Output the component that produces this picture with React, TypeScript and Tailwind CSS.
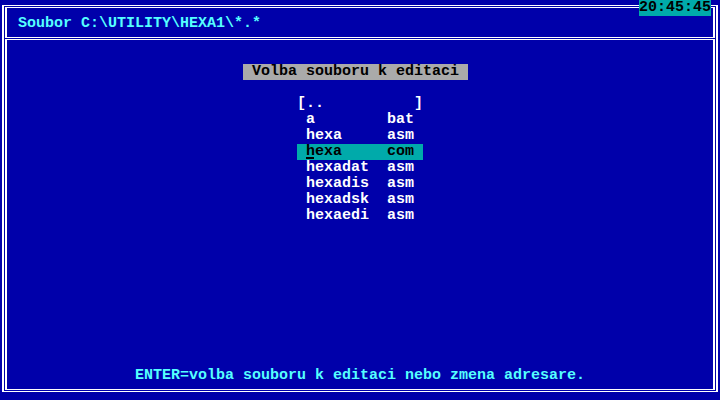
const files: [string, string][] = [
  ['a', 'bat'],
  ['hexa', 'asm'],
  ['hexa', 'com'],
  ['hexadat', 'asm'],
  ['hexadis', 'asm'],
  ['hexadsk', 'asm'],
  ['hexaedi', 'asm'],
];

const SELECTED = 2;

function FileRow({ name, ext, selected }: { name: string; ext: string; selected: boolean }) {
  return (
    <div
      className={`flex h-4 w-[126px] whitespace-pre ${
        selected ? 'bg-[#00aaaa] text-black' : 'text-white'
      }`}
    >
      <span className="w-[9px]"> </span>
      {selected ? (
        <span className="w-[81px]">
          <span className="relative inline-block w-[9px]">
            {name[0]}
            <span className="absolute left-0 top-[13px] h-[2px] w-[8px] bg-black" />
          </span>
          {name.slice(1)}
        </span>
      ) : (
        <span className="w-[81px]">{name}</span>
      )}
      <span>{ext}</span>
    </div>
  );
}

export default function App() {
  return (
    <div
      className="relative h-[400px] w-[720px] overflow-hidden bg-[#0000aa] pt-[5px] text-[15px] font-bold leading-4"
      style={{ fontFamily: '"Liberation Mono", "DejaVu Sans Mono", monospace' }}
    >
      {/* clock */}
      <div className="absolute left-[639px] top-0 h-4 w-[72px] bg-[#00aaaa] text-black">20:45:45</div>

      {/* outer double frame */}
      <div className="mx-[2px] flex h-[387px] flex-col gap-px border-x-2 border-y border-white p-px">
        {/* header box */}
        <div className="h-[31px] border-x-2 border-y border-white pl-[11px] pt-[8px]">
          <div className="whitespace-pre text-[#55ffff]">{'Soubor C:\\UTILITY\\HEXA1\\*.*'}</div>
        </div>

        {/* main box */}
        <div className="flex flex-1 flex-col border-x-2 border-y border-white pb-[5px] pt-[24px]">
          <div className="ml-[236px] w-[225px] whitespace-pre bg-[#aaaaaa] text-black">
            {' Volba souboru k editaci '}
          </div>

          <div className="ml-[290px] mt-4 flex flex-col">
            <div className="h-4 whitespace-pre text-white">{'[..          ]'}</div>
            {files.map(([name, ext], i) => (
              <FileRow key={i} name={name} ext={ext} selected={i === SELECTED} />
            ))}
          </div>

          <div className="mt-auto flex justify-center">
            <div className="whitespace-pre text-[#55ffff]">
              ENTER=volba souboru k editaci nebo zmena adresare.
            </div>
          </div>
        </div>
      </div>
    </div>
  );
}
